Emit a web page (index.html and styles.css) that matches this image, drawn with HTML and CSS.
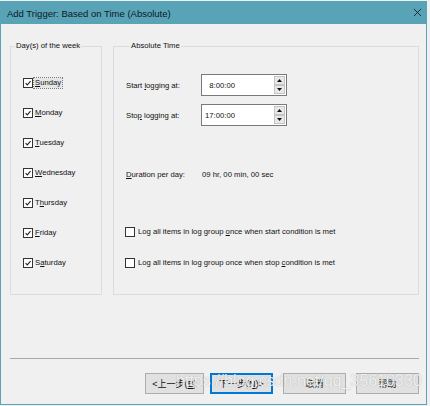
FILE: index.html
```html
<!DOCTYPE html>
<html>
<head>
<meta charset="utf-8">
<link rel="stylesheet" href="styles.css">
</head>
<body>
<div class="window">
  <div class="titlebar">
    <span class="title">Add Trigger: Based on Time (Absolute)</span>
    <svg class="close" width="10" height="10" viewBox="0 0 10 10"><path d="M1 1 L9 9 M9 1 L1 9" stroke="#1e2a2e" stroke-width="1.1" fill="none"/></svg>
  </div>
  <div class="content">
    <div class="groups">
      <fieldset class="group days">
        <legend>Day(s) of the week</legend>
        <div class="daylist">
          <div class="chk"><span class="box on"><svg viewBox="0 0 10 10"><path d="M2 5.2 L4.1 7.4 L8.2 2.6"/></svg></span><span class="lbl focus"><u>S</u>unday</span></div>
          <div class="chk"><span class="box on"><svg viewBox="0 0 10 10"><path d="M2 5.2 L4.1 7.4 L8.2 2.6"/></svg></span><span class="lbl"><u>M</u>onday</span></div>
          <div class="chk"><span class="box on"><svg viewBox="0 0 10 10"><path d="M2 5.2 L4.1 7.4 L8.2 2.6"/></svg></span><span class="lbl"><u>T</u>uesday</span></div>
          <div class="chk"><span class="box on"><svg viewBox="0 0 10 10"><path d="M2 5.2 L4.1 7.4 L8.2 2.6"/></svg></span><span class="lbl"><u>W</u>ednesday</span></div>
          <div class="chk"><span class="box on"><svg viewBox="0 0 10 10"><path d="M2 5.2 L4.1 7.4 L8.2 2.6"/></svg></span><span class="lbl">T<u>h</u>ursday</span></div>
          <div class="chk"><span class="box on"><svg viewBox="0 0 10 10"><path d="M2 5.2 L4.1 7.4 L8.2 2.6"/></svg></span><span class="lbl"><u>F</u>riday</span></div>
          <div class="chk"><span class="box on"><svg viewBox="0 0 10 10"><path d="M2 5.2 L4.1 7.4 L8.2 2.6"/></svg></span><span class="lbl">S<u>a</u>turday</span></div>
        </div>
      </fieldset>
      <fieldset class="group abs">
        <legend>Absolute Time</legend>
        <div class="timerow first">
          <span class="rlabel">Start <u>l</u>ogging at:</span>
          <div class="spin">
            <span class="val">8:00:00</span>
            <div class="arrows">
              <span class="sb"><svg viewBox="0 0 5 3"><path d="M0 3 L2.5 0 L5 3Z"/></svg></span>
              <span class="sb"><svg viewBox="0 0 5 3"><path d="M0 0 L2.5 3 L5 0Z"/></svg></span>
            </div>
          </div>
        </div>
        <div class="timerow second">
          <span class="rlabel">Sto<u>p</u> logging at:</span>
          <div class="spin">
            <span class="val">17:00:00</span>
            <div class="arrows">
              <span class="sb"><svg viewBox="0 0 5 3"><path d="M0 3 L2.5 0 L5 3Z"/></svg></span>
              <span class="sb"><svg viewBox="0 0 5 3"><path d="M0 0 L2.5 3 L5 0Z"/></svg></span>
            </div>
          </div>
        </div>
        <div class="duration">
          <span class="rlabel"><u>D</u>uration per day:</span>
          <span class="dval">09 hr, 00 min, 00 sec</span>
        </div>
        <div class="chk logchk one"><span class="box"></span><span class="lbl">Log all items in log group <u>o</u>nce when start condition is met</span></div>
        <div class="chk logchk two"><span class="box"></span><span class="lbl">Log all items in log group once when stop <u>c</u>ondition is met</span></div>
      </fieldset>
    </div>
    <div class="sep"></div>
    <div class="buttons">
      <button class="btn back">&lt;上一步(<u>B</u>)</button>
      <button class="btn next">下一步(<u>N</u>)&gt;</button>
      <button class="btn">取消</button>
      <button class="btn">帮助</button>
    </div>
  </div>
  <div class="watermark">https://blog.csdn.net/qq_35610330</div>
</div>
</body>
</html>
```
FILE: styles.css
```css
html, body {
  margin: 0;
  padding: 0;
}
body {
  width: 430px;
  height: 406px;
  padding-top: 1px;
  box-sizing: border-box;
  background: #eef0f1;
  font-family: "Liberation Sans", Arial, "Noto Sans CJK SC", sans-serif;
  overflow: hidden;
}
.window {
  position: relative;
  width: 427px;
  height: 404px;
  box-sizing: border-box;
  border: 1px solid #58a3b6;
  border-top: none;
  background: #f0f0f0;
}
.titlebar {
  height: 23px;
  background: #58a3b6;
  display: flex;
  align-items: center;
  justify-content: space-between;
  padding: 0 4px 0 6px;
}
.title {
  font-size: 9.5px;
  color: #0b1a1f;
  padding-top: 1px;
}
.close {
  width: 9px;
  height: 9px;
  margin-right: 0;
}
.content {
  padding: 17px 7px 0 9px;
  font-size: 7.7px;
  color: #111;
}
.groups {
  display: flex;
  gap: 11px;
}
.group {
  margin: 0;
  padding: 0;
  border: 1px solid #dcdcdc;
  box-sizing: border-box;
  height: 254px;
  min-width: 0;
}
.group legend {
  margin-left: 4px;
  padding: 0 1px;
  line-height: 10px;
  font-size: 7.7px;
  color: #111;
}
.days {
  width: 92px;
}
.abs {
  width: 306px;
  padding-left: 12px;
}
.daylist {
  display: grid;
  grid-auto-rows: 30px;
  padding: 17px 0 0 12px;
}
.chk {
  display: flex;
  align-items: center;
}
.box {
  width: 10px;
  height: 10px;
  box-sizing: border-box;
  border: 1px solid #333;
  background: #fff;
  display: inline-flex;
  flex: none;
}
.box svg {
  width: 8px;
  height: 8px;
}
.box svg path {
  fill: none;
  stroke: #222;
  stroke-width: 1.3;
}
.lbl {
  margin-left: 2px;
  line-height: 10px;
}
.focus {
  outline: 1px dotted #7a7a7a;
  background: #e6e6e6;
  padding: 0 1px;
  margin-left: 1px;
}
.timerow {
  display: flex;
  align-items: center;
  height: 22px;
}
.timerow.first {
  margin-top: 23px;
}
.timerow.second {
  margin-top: 8px;
}
.rlabel {
  width: 75px;
  flex: none;
}
.spin {
  width: 86px;
  height: 22px;
  box-sizing: border-box;
  border: 1px solid #7a7a7a;
  background: #fff;
  display: flex;
  align-items: center;
  justify-content: space-between;
  padding: 0 1px 0 1px;
}
.val {
  width: 32px;
  text-align: right;
}
.arrows {
  display: flex;
  flex-direction: column;
  gap: 0;
}
.sb {
  width: 11px;
  height: 9px;
  box-sizing: border-box;
  border: 1px solid #c4c4c4;
  background: #e8e8e8;
  display: flex;
  align-items: center;
  justify-content: center;
}
.sb svg {
  width: 5px;
  height: 3px;
}
.sb svg path {
  fill: #111;
}
.duration {
  display: flex;
  align-items: center;
  height: 12px;
  margin-top: 42px;
}
.dval {
  padding-left: 1px;
}
.logchk {
  height: 12px;
  padding-left: 0;
  margin-left: -1px;
}
.logchk .lbl {
  margin-left: 3px;
}
.logchk.one {
  margin-top: 46px;
}
.logchk.two {
  margin-top: 19px;
}
.sep {
  height: 1px;
  background: #a9a9a9;
  margin-top: 63px;
}
.buttons {
  display: flex;
  justify-content: flex-end;
  margin-top: 14px;
  gap: 10px;
}
.btn {
  width: 63px;
  height: 21px;
  box-sizing: border-box;
  border: 1px solid #adadad;
  background: #e1e1e1;
  font-family: "Liberation Sans", "Noto Sans CJK SC", sans-serif;
  font-size: 9px;
  color: #111;
  padding: 0;
  margin: 0;
}
.btn.back {
  width: 59px;
  margin-right: -4px;
}
.btn.next {
  border: 1px solid #0078d7;
  box-shadow: inset 0 0 0 1px #0078d7;
}
.watermark {
  position: absolute;
  left: 175px;
  top: 371px;
  font-size: 16px;
  font-family: "Liberation Sans", Arial, sans-serif;
  color: rgba(255, 255, 255, 0.85);
  text-shadow: 0 0 1px rgba(90, 90, 90, 0.5);
  white-space: nowrap;
}
```
